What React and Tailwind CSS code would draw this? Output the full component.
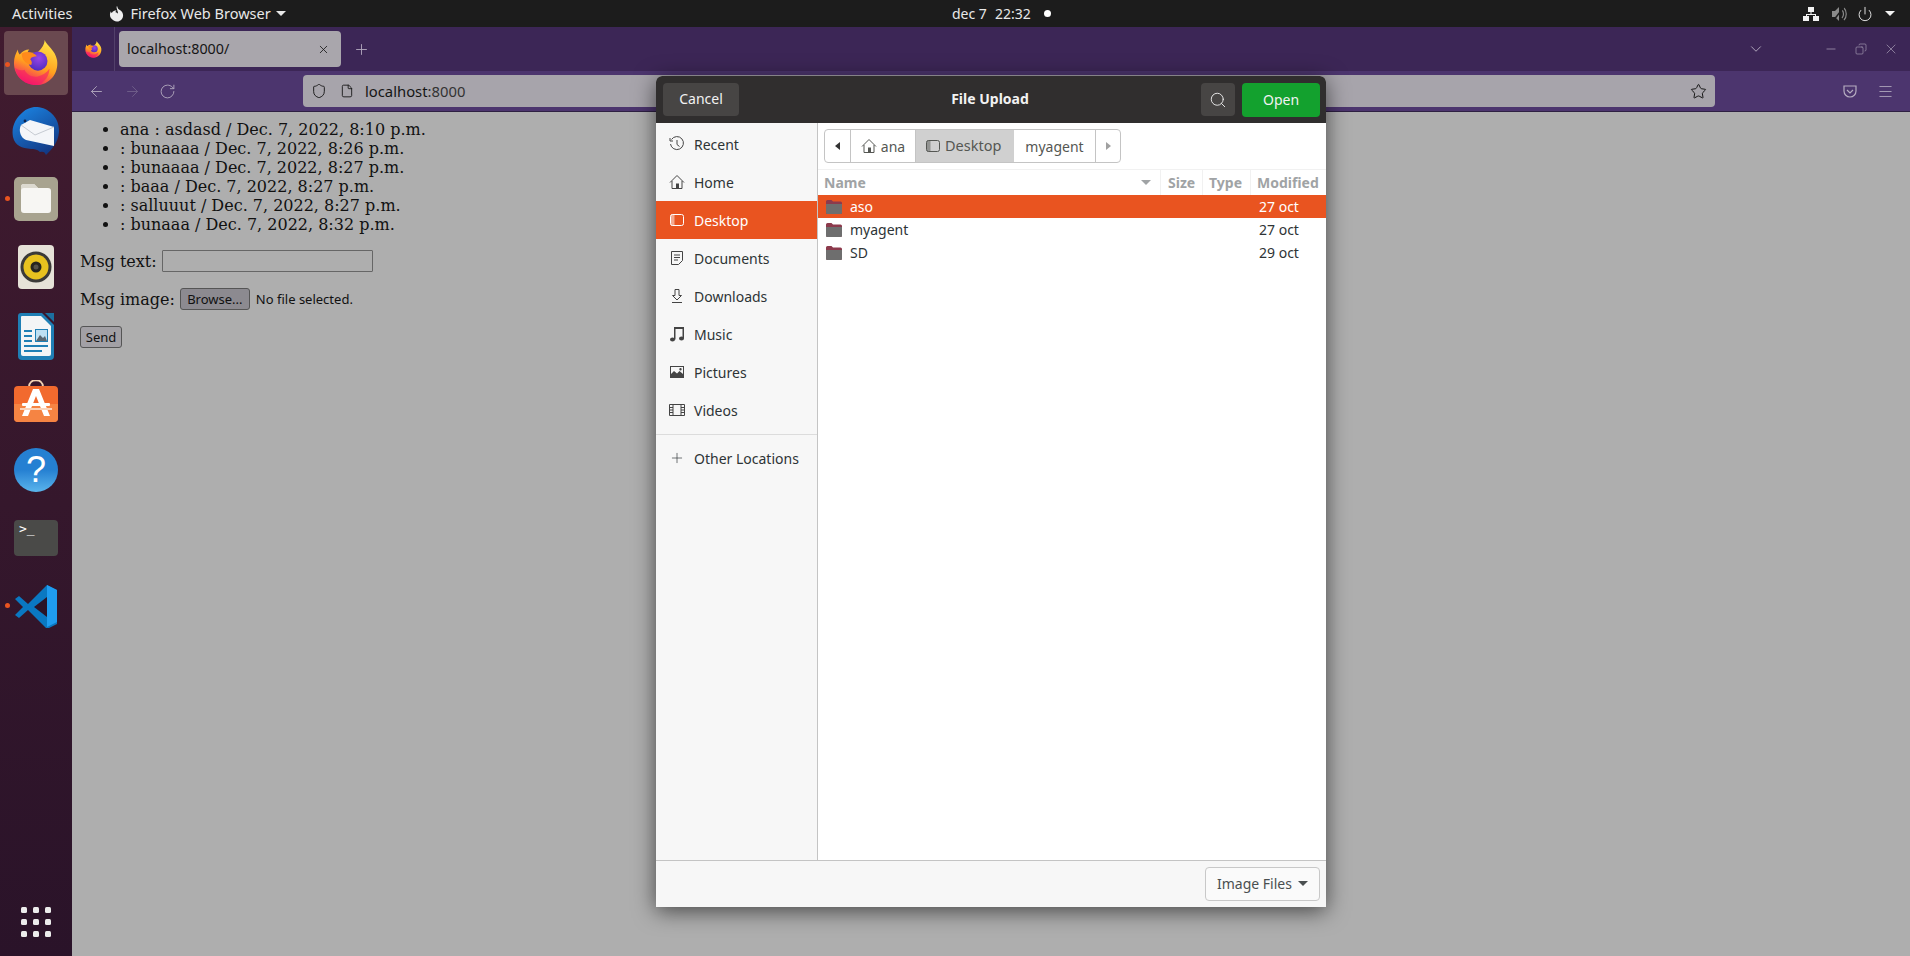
import React from 'react';
import { ArrowLeft, ArrowRight, ChevronDown, Copy, File, Menu, Minus, Plus, Power, RotateCw, Search, Shield, Star, X } from 'lucide-react';

const UI = "font-['Noto_Sans',sans-serif]";

const messages = [
  'ana : asdasd / Dec. 7, 2022, 8:10 p.m.',
  ': bunaaaa / Dec. 7, 2022, 8:26 p.m.',
  ': bunaaaa / Dec. 7, 2022, 8:27 p.m.',
  ': baaa / Dec. 7, 2022, 8:27 p.m.',
  ': salluuut / Dec. 7, 2022, 8:27 p.m.',
  ': bunaaa / Dec. 7, 2022, 8:32 p.m.',
];

const FirefoxLogo = ({ size = 46, id = 'ff' }) => (
  <svg width={size} height={size} viewBox="0 0 48 48">
    <defs>
      <linearGradient id={`${id}a`} x1="0.8" y1="0" x2="0.4" y2="1">
        <stop offset="0" stopColor="#ffe94a" />
        <stop offset="0.6" stopColor="#ffa01f" />
        <stop offset="1" stopColor="#f5156c" />
      </linearGradient>
      <radialGradient id={`${id}b`} cx="0.55" cy="0.35" r="0.7">
        <stop offset="0" stopColor="#9a45e6" />
        <stop offset="1" stopColor="#4b2bbd" />
      </radialGradient>
    </defs>
    <path d="M33 0c2 6 11 10 13 21 2 14-8 26-22 26C11 47 1 37 1 24c0-6 2-10 4-14 0 2 1 4 2 5 3-3 6-5 10-5-1 1-2 3-2 4 3-1 7-1 9 0 4-3 9-8 9-14z" fill={`url(#${id}a)`} />
    <path d="M2 29c4 3 7 3 10 2 3 6 8 8 14 7 5-1 9-4 12-8 0 3-1 6-2 8-3 5-7 9-12 9-11 0-20-7-22-18z" fill="#f5156c" opacity="0.55" />
    <circle cx="26" cy="22" r="10" fill={`url(#${id}b)`} />
    <path d="M9 14c6-3 13-1 16 3-3 0-6 1-7 3 2 2 2 4 1 6-6-1-10-6-10-12z" fill="#ff8a1c" />
  </svg>
);

const ThunderbirdLogo = () => (
  <svg width="48" height="48" viewBox="0 0 48 48">
    <defs>
      <linearGradient id="tb" x1="0.2" y1="0" x2="0.8" y2="1">
        <stop offset="0" stopColor="#1b82e0" />
        <stop offset="1" stopColor="#12357f" />
      </linearGradient>
    </defs>
    <path d="M22 0c12-1 26 9 25 25-1 11-7 17-13 23-1-3-3-4-6-3-3-3-6-3-9-3-9-1-16-3-18-12-2-11 3-19 10-25 3-3 7-4 11-5z" fill="url(#tb)" />
    <path d="M9 18l9-5 24 7v19l-28-6c-5-2-8-9-5-15z" fill="#f4f6f9" />
    <path d="M9 18l14 10 19-8" fill="none" stroke="#c6cbd2" strokeWidth="1" />
    <circle cx="13" cy="14" r="1.4" fill="#0c2450" />
  </svg>
);

const FilesIcon = () => (
  <svg width="44" height="44" viewBox="0 0 44 44">
    <rect width="44" height="44" rx="5" fill="#a8a38f" />
    <path d="M7 10a3 3 0 013-3h10l4 4h10a3 3 0 013 3v19a3 3 0 01-3 3H10a3 3 0 01-3-3z" fill="#f7f6f3" />
    <path d="M7 13V10a3 3 0 013-3h10l4 4H10a3 3 0 00-3 2z" fill="#dcd9cf" />
  </svg>
);

const RhythmboxIcon = () => (
  <svg width="36" height="44" viewBox="0 0 36 44">
    <rect width="36" height="44" rx="4" fill="#e6e2d8" />
    <circle cx="18" cy="22" r="15.5" fill="#3b3a38" />
    <circle cx="18" cy="22" r="12.5" fill="#e8c21f" />
    <circle cx="18" cy="22" r="5.5" fill="#26251f" />
    <circle cx="18" cy="22" r="2.5" fill="#55524a" />
  </svg>
);

const WriterIcon = () => (
  <svg width="36" height="47" viewBox="0 0 36 47">
    <path d="M3 0h21l12 12v31a4 4 0 01-4 4H4a4 4 0 01-4-4V3a3 3 0 013-3z" fill="#1f7fb5" />
    <path d="M4 3h19l10 10v28a2 2 0 01-2 2H5a2 2 0 01-2-2V4a1 1 0 011-1z" fill="#f4f5f6" />
    <path d="M27 0l9 9V0z" fill="#1c6f9f" />
    <rect x="6" y="17" width="8" height="2" fill="#1f7fb5" />
    <rect x="6" y="22" width="8" height="2" fill="#1f7fb5" />
    <rect x="6" y="27" width="8" height="2" fill="#1f7fb5" />
    <rect x="6" y="32" width="24" height="2" fill="#1f7fb5" />
    <rect x="6" y="37" width="18" height="2" fill="#1f7fb5" />
    <rect x="17" y="16" width="13" height="13" fill="#1f7fb5" />
    <rect x="18" y="17" width="11" height="11" fill="#bfe0f2" />
    <path d="M18 28l4-6 3 3 2-2 2 5z" fill="#5b6770" />
  </svg>
);

const AppStoreIcon = () => (
  <svg width="44" height="44" viewBox="0 0 44 44">
    <path d="M15 7c0-9 14-9 14 0" fill="none" stroke="#f3d3b4" strokeWidth="2" />
    <rect y="6" width="44" height="36" rx="4" fill="#f26a2e" />
    <path d="M0 24h44v14a4 4 0 01-4 4H4a4 4 0 01-4-4z" fill="#f58443" />
    <path d="M19 9h6l11 27h-6l-8-20-8 20H8z" fill="#fff" />
    <rect x="8" y="23" width="28" height="3" rx="1" fill="#fff" />
    <rect x="6" y="28" width="32" height="2" fill="#fbd3ba" />
  </svg>
);

const HelpIcon = () => (
  <div className="w-[44px] h-[44px] rounded-full bg-gradient-to-b from-[#2580d2] from-50% to-[#5ab5ec] flex items-center justify-center text-white text-[36px] leading-none font-['Liberation_Sans',sans-serif]">?</div>
);

const TerminalIcon = () => (
  <div className="w-[44px] h-[36px] rounded-[4px] bg-[#4a4a48] relative">
    <span className="absolute left-[5px] top-[2px] text-white text-[13px] leading-[14px] font-['DejaVu_Sans_Mono',monospace]">&gt;_</span>
  </div>
);

const VscodeIcon = () => (
  <svg width="44" height="44" viewBox="0 0 44 44">
    <path d="M33 1L14 20 5 12 1 15l8 8-8 8 4 3 9-8 19 19 10-5V6z" fill="#0a78c2" />
    <path d="M33 1l10 5v32l-10 5z" fill="#1f9cf0" />
    <path d="M33 13L20 23l13 10z" fill="#2a1428" />
  </svg>
);

const DockItem = ({ children, running, className = '' }) => (
  <div className={`relative flex justify-center ${className}`}>
    {running && <span className="absolute left-[5px] top-1/2 -mt-[3px] w-[5px] h-[5px] rounded-full bg-[#e95420]" />}
    {children}
  </div>
);

const Dock = () => (
  <aside className="w-[72px] shrink-0 bg-gradient-to-b from-[#411b2f] to-[#2a1329] flex flex-col items-stretch">
    <div className="relative flex justify-center mt-[4px]">
      <span className="absolute left-[5px] top-[31px] w-[5px] h-[5px] rounded-full bg-[#e95420]" />
      <div className="w-[64px] h-[64px] rounded-[4px] bg-[#6a4950] flex items-center justify-center">
        <FirefoxLogo id="dock" />
      </div>
    </div>
    <DockItem className="mt-[12px]"><ThunderbirdLogo /></DockItem>
    <DockItem running className="mt-[22px]"><FilesIcon /></DockItem>
    <DockItem className="mt-[24px]"><RhythmboxIcon /></DockItem>
    <DockItem className="mt-[24px]"><WriterIcon /></DockItem>
    <DockItem className="mt-[20px]"><AppStoreIcon /></DockItem>
    <DockItem className="mt-[24px]"><HelpIcon /></DockItem>
    <DockItem className="mt-[28px]"><TerminalIcon /></DockItem>
    <DockItem running className="mt-[28px]"><VscodeIcon /></DockItem>
    <div className="mt-auto mb-[19px] mx-auto grid grid-cols-3 gap-[6px]">
      {Array.from({ length: 9 }).map((_, i) => (
        <span key={i} className="w-[6px] h-[6px] rounded-[1.5px] bg-[#ececec]" />
      ))}
    </div>
  </aside>
);

const TopBar = () => (
  <header className={`h-[27px] bg-[#1c1c1c] text-[#e8e8e8] text-[14.5px] flex items-center relative ${UI}`}>
    <span className="ml-[12px]">Activities</span>
    <svg className="ml-[37px]" width="15" height="16" viewBox="0 0 16 16">
      <path d="M9 0c0 2 1 3 3 4 3 2 4 6 2 9-2 3-6 4-9 2-4-2-5-6-3-10 0 1 1 2 1 2 1-2 3-3 5-3-1 1-1 2-1 2 1 0 3 1 3 3s-2 3-3 3-3-1-3-3c1 2 3 3 5 1 2-3-1-6-1-10z" fill="#eee" />
    </svg>
    <span className="ml-[6px]">Firefox Web Browser</span>
    <span className="ml-[5px] w-0 h-0 border-x-[5px] border-x-transparent border-t-[5px] border-t-[#e8e8e8]" />
    <div className="absolute left-[952px] top-0 h-full flex items-center text-[14px]">
      <span>dec 7</span>
      <span className="ml-[8px]">22:32</span>
      <span className="ml-[13px] w-[7px] h-[7px] rounded-full bg-white" />
    </div>
    <div className="ml-auto mr-[15px] flex items-center">
      <svg width="16" height="14" viewBox="0 0 16 14" fill="#f2f2f2">
        <rect x="5" y="0" width="6" height="5" />
        <rect x="0" y="9" width="6" height="5" />
        <rect x="10" y="9" width="6" height="5" />
        <path d="M7.5 5h1v2H13v2h-1V8H4v1H3V7h4.5z" />
      </svg>
      <svg className="ml-[13px]" width="16" height="14" viewBox="0 0 16 14">
        <path d="M0 4h3l4-4v14l-4-4H0z" fill="#8a8a8a" />
        <path d="M10 3c2 2 2 6 0 8M12 1c3 3 3 9 0 12" fill="none" stroke="#8a8a8a" strokeWidth="1.2" />
        <path d="M1 14L12 0" stroke="#1c1c1c" strokeWidth="1.5" />
      </svg>
      <Power className="ml-[9px] text-[#ececec]" size={16} strokeWidth={1.4} />
      <span className="ml-[12px] w-0 h-0 border-x-[5px] border-x-transparent border-t-[5px] border-t-[#f2f2f2]" />
    </div>
  </header>
);

const BrowserChrome = () => (
  <>
    <div className={`h-[44px] bg-[#3c2656] flex items-center text-[#151515] ${UI}`}>
      <div className="w-[43px] h-full flex items-center justify-center border-r border-[#52406a]">
        <FirefoxLogo size={17} id="view" />
      </div>
      <div className="ml-[4px] w-[222px] h-[36px] rounded-[4px] bg-[#a9a6ac] flex items-center pl-[8px] pr-[11px] text-[14.3px]">
        <span>localhost:8000/</span>
        <X className="ml-auto" size={13} strokeWidth={1.5} />
      </div>
      <Plus className="ml-[12px] text-[#b0a7bc]" size={17} strokeWidth={1.3} />
      <div className="ml-auto flex items-center text-[#b0a7bc]">
        <ChevronDown size={18} strokeWidth={1.3} />
        <Minus className="ml-[59px]" size={14} strokeWidth={1.2} />
        <Copy className="ml-[17px] -scale-x-100" size={12} strokeWidth={1.2} />
        <X className="ml-[16px] mr-[11px]" size={16} strokeWidth={1} />
      </div>
    </div>
    <div className={`h-[41px] bg-[#4c356e] border-b border-[#2e2042] flex items-center ${UI}`}>
      <ArrowLeft className="ml-[16px] text-[#b0a7bc]" size={17} strokeWidth={1.3} />
      <ArrowRight className="ml-[19px] text-[#70608a]" size={17} strokeWidth={1.3} />
      <RotateCw className="ml-[18px] text-[#b0a7bc]" size={17} strokeWidth={1.3} />
      <div className="ml-[127px] w-[1412px] h-[32px] rounded-[4px] bg-[#a7a4ab] flex items-center text-[14.8px] text-[#151515]">
        <Shield className="ml-[8px]" size={16} strokeWidth={1.4} />
        <File className="ml-[13px]" size={14} strokeWidth={1.5} />
        <span className="ml-[11px]">localhost<span className="text-[#333]">:8000</span></span>
        <Star className="ml-auto mr-[8px]" size={17} strokeWidth={1.4} />
      </div>
      <svg className="ml-[128px] text-[#b5acc0]" width="14" height="13" viewBox="0 0 14 13" fill="none" stroke="currentColor" strokeWidth="1.2">
        <path d="M1 1h12v5a6 6 0 01-12 0z" />
        <path d="M4 5l3 3 3-3" />
      </svg>
      <Menu className="ml-[20px] text-[#b5acc0]" size={17} strokeWidth={1.2} />
    </div>
  </>
);

const PageContent = () => (
  <main className="flex-1 bg-[#aeaeae] pt-[8px] pl-[8px] font-['DejaVu_Serif',serif] text-[16px] leading-[19px] text-[#111]">
    <ul className="list-disc pl-[40px]">
      {messages.map((m, i) => <li key={i}>{m}</li>)}
    </ul>
    <div className="mt-[16px] h-[22px] flex items-center">
      <span>Msg text:</span>
      <div className="ml-[5px] w-[211px] h-[22px] border border-[#666] rounded-[1px] bg-[#aeaeae]" />
    </div>
    <div className="mt-[16px] h-[22px] flex items-center">
      <span>Msg image:</span>
      <button className={`ml-[5px] w-[70px] h-[22px] border border-[#555] rounded-[3px] bg-[#8c8a90] text-[13px] text-[#111] ${UI}`}>Browse...</button>
      <span className={`ml-[6px] text-[13px] ${UI}`}>No file selected.</span>
    </div>
    <button className={`mt-[16px] w-[42px] h-[22px] border border-[#555] rounded-[3px] bg-[#a2a0a5] text-[13px] text-[#111] ${UI}`}>Send</button>
  </main>
);

// small symbolic icons of the GTK sidebar
const icon = { width: 16, height: 16, viewBox: '0 0 16 16', fill: 'none', stroke: 'currentColor', strokeWidth: 1 };

const RecentIcon = () => (
  <svg {...icon}><path d="M2.500 3.500A6.500 6.500 0 111.500 8M8 4v4.500l2.500 2" /><path d="M1 2v3h3" /></svg>
);
const HomeIcon = () => (
  <svg {...icon}><path d="M1 8.500L8 1.500l7 7M3 7v7.500h10V7" /><rect x="7" y="9.500" width="3" height="5" fill="currentColor" stroke="none" /></svg>
);
const DesktopIcon = () => (
  <svg {...icon}><rect x="1.500" y="2.500" width="13" height="11" rx="2" /><path d="M2 4a1.500 1.500 0 011.500-1.500H5v11H3.500A1.500 1.500 0 012 12z" fill="currentColor" opacity="0.5" /></svg>
);
const DocumentsIcon = () => (
  <svg {...icon}><path d="M2.500 1.500h11v9l-4 4h-7zM5 5h6M5 7.500h6M5 10h4" /></svg>
);
const DownloadsIcon = () => (
  <svg {...icon}><path d="M6 1.500h4v6h2.500L8 12 3.500 7.500H6zM3 14.500h10" /></svg>
);
const MusicIcon = () => (
  <svg width="16" height="16" viewBox="0 0 16 16" fill="currentColor">
    <path d="M5 1h10v11.500h-1.500V3H6.500v10.500H5z" />
    <ellipse cx="3.500" cy="13.500" rx="2.500" ry="2" />
    <ellipse cx="12.500" cy="12.500" rx="2.500" ry="2" />
  </svg>
);
const PicturesIcon = () => (
  <svg width="16" height="16" viewBox="0 0 16 16" fill="currentColor">
    <path fillRule="evenodd" d="M1 2h14v12H1zM2 3v7l3-3 3 2.500L10.500 7 14 10V3zM11.500 4a1.200 1.200 0 110 2.400 1.200 1.200 0 010-2.400z" />
  </svg>
);
const VideosIcon = () => (
  <svg {...icon}><path d="M.5 2.500h15v11H.5zM4 2.500v11M12 2.500v11M.5 5.500H4M.5 8H4M.5 10.500H4M12 5.500h3.500M12 8h3.500M12 10.500h3.500" /></svg>
);

const places = [
  { label: 'Recent', Icon: RecentIcon },
  { label: 'Home', Icon: HomeIcon },
  { label: 'Desktop', Icon: DesktopIcon, selected: true },
  { label: 'Documents', Icon: DocumentsIcon },
  { label: 'Downloads', Icon: DownloadsIcon },
  { label: 'Music', Icon: MusicIcon },
  { label: 'Pictures', Icon: PicturesIcon },
  { label: 'Videos', Icon: VideosIcon },
];

const Sidebar = () => (
  <nav className="w-[162px] shrink-0 bg-[#f7f7f7] border-r border-[#c4c4c4] pt-[2px]">
    {places.map(({ label, Icon, selected }) => (
      <div key={label} className={`h-[38px] flex items-center pl-[13px] ${selected ? 'bg-[#e95420] text-white' : 'text-[#2e3436]'}`}>
        <span className={`w-[16px] flex justify-center ${selected ? 'text-white' : 'text-[#444]'}`}><Icon /></span>
        <span className="ml-[9px]">{label}</span>
      </div>
    ))}
    <div className="h-px bg-[#dcdcdc] mt-[5px]" />
    <div className="h-[46px] flex items-center pl-[13px] text-[#2e3436]">
      <Plus size={16} strokeWidth={1} />
      <span className="ml-[9px]">Other Locations</span>
    </div>
  </nav>
);

const PathBar = () => (
  <div className="mt-[6px] ml-[6px] w-[297px] h-[34px] flex border border-[#c4c4c4] rounded-[4px] text-[#555753] overflow-hidden">
    <div className="w-[26px] flex items-center justify-center border-r border-[#c4c4c4]">
      <span className="w-0 h-0 border-y-[4.500px] border-y-transparent border-r-[5px] border-r-[#333]" />
    </div>
    <div className="w-[65px] flex items-center justify-center gap-[4px] border-r border-[#c4c4c4]">
      <HomeIcon />ana
    </div>
    <div className="w-[98px] flex items-center gap-[4px] pl-[9px] bg-[#d0d0d0] text-[14.500px]">
      <DesktopIcon />Desktop
    </div>
    <div className="w-[82px] flex items-center justify-center border-r border-[#c4c4c4]">myagent</div>
    <div className="flex-1 flex items-center justify-center">
      <span className="w-0 h-0 border-y-[4.500px] border-y-transparent border-l-[5px] border-l-[#a0a0a0]" />
    </div>
  </div>
);

const FolderIcon = () => (
  <svg width="16" height="16" viewBox="0 0 16 16">
    <path d="M0 2.500A1.500 1.500 0 011.500 1h4l1.500 1.500h7.500A1.500 1.500 0 0116 4v9.500a1.500 1.500 0 01-1.500 1.500h-13A1.500 1.500 0 010 13.500z" fill="#8c3a4c" />
    <path d="M0 5h16v8.500a1.500 1.500 0 01-1.500 1.500h-13A1.500 1.500 0 010 13.500z" fill="#6e6e6e" />
  </svg>
);

const files = [
  { name: 'aso', date: '27 oct', selected: true },
  { name: 'myagent', date: '27 oct' },
  { name: 'SD', date: '29 oct' },
];

const FileList = () => (
  <section className="flex-1 flex flex-col min-w-0 bg-white">
    <PathBar />
    <div className="mt-[6px] h-[26px] flex items-center border-t border-[#f1f1f1] text-[#a0a3a5] font-bold">
      <div className="w-[343px] flex items-center pl-[6px] h-full border-r border-[#f1f1f1]">
        <span>Name</span>
        <span className="ml-auto mr-[9px] w-0 h-0 border-x-[5px] border-x-transparent border-t-[5px] border-t-[#a0a3a5]" />
      </div>
      <div className="w-[42px] pl-[7px] h-full flex items-center border-r border-[#f1f1f1]">Size</div>
      <div className="w-[48px] pl-[6px] h-full flex items-center border-r border-[#f1f1f1]">Type</div>
      <div className="flex-1 pl-[6px] h-full flex items-center">Modified</div>
    </div>
    {files.map((f) => (
      <div key={f.name} className={`h-[23px] flex items-center ${f.selected ? 'bg-[#e95420] text-white' : 'text-[#2e3436]'}`}>
        <span className="ml-[8px]"><FolderIcon /></span>
        <span className="ml-[8px]">{f.name}</span>
        <span className="ml-auto w-[67px]">{f.date}</span>
      </div>
    ))}
  </section>
);

const FileDialog = () => (
  <div className={`absolute left-[656px] top-[76px] w-[670px] h-[831px] flex flex-col rounded-t-[6px] overflow-hidden bg-white shadow-[0_4px_22px_rgba(0,0,0,0.6)] text-[14px] ${UI}`}>
    <div className="h-[47px] shrink-0 bg-[#302e2e] flex items-center relative text-[#f2f2f2]">
      <button className="ml-[7px] w-[76px] h-[33px] pb-[2px] rounded-[4px] bg-[#474544]">Cancel</button>
      <span className="absolute left-0 right-[2px] text-center font-bold pb-[2px]">File Upload</span>
      <button className="ml-auto w-[34px] h-[33px] rounded-[4px] bg-[#474544] flex items-center justify-center relative">
        <Search size={18} strokeWidth={1.2} />
      </button>
      <button className="ml-[7px] mr-[6px] w-[78px] h-[34px] pb-[1px] rounded-[4px] bg-[#13a12e] relative">Open</button>
    </div>
    <div className="flex-1 flex min-h-0">
      <Sidebar />
      <FileList />
    </div>
    <div className="h-[47px] shrink-0 bg-[#f7f7f7] border-t border-[#c4c4c4] flex items-center justify-end pr-[6px]">
      <button className="w-[115px] h-[34px] border border-[#c8c8c8] rounded-[4px] bg-[#fafafa] text-[#4a4f50] flex items-center pl-[11px] pb-[1px]">
        Image Files
        <span className="ml-[6px] w-0 h-0 border-x-[5px] border-x-transparent border-t-[5px] border-t-[#4a4f50]" />
      </button>
    </div>
  </div>
);

export default function App() {
  return (
    <div className="relative w-[1910px] h-[956px] overflow-hidden flex flex-col">
      <TopBar />
      <div className="flex-1 flex min-h-0">
        <Dock />
        <div className="flex-1 flex flex-col min-w-0">
          <BrowserChrome />
          <PageContent />
        </div>
      </div>
      <FileDialog />
    </div>
  );
}
